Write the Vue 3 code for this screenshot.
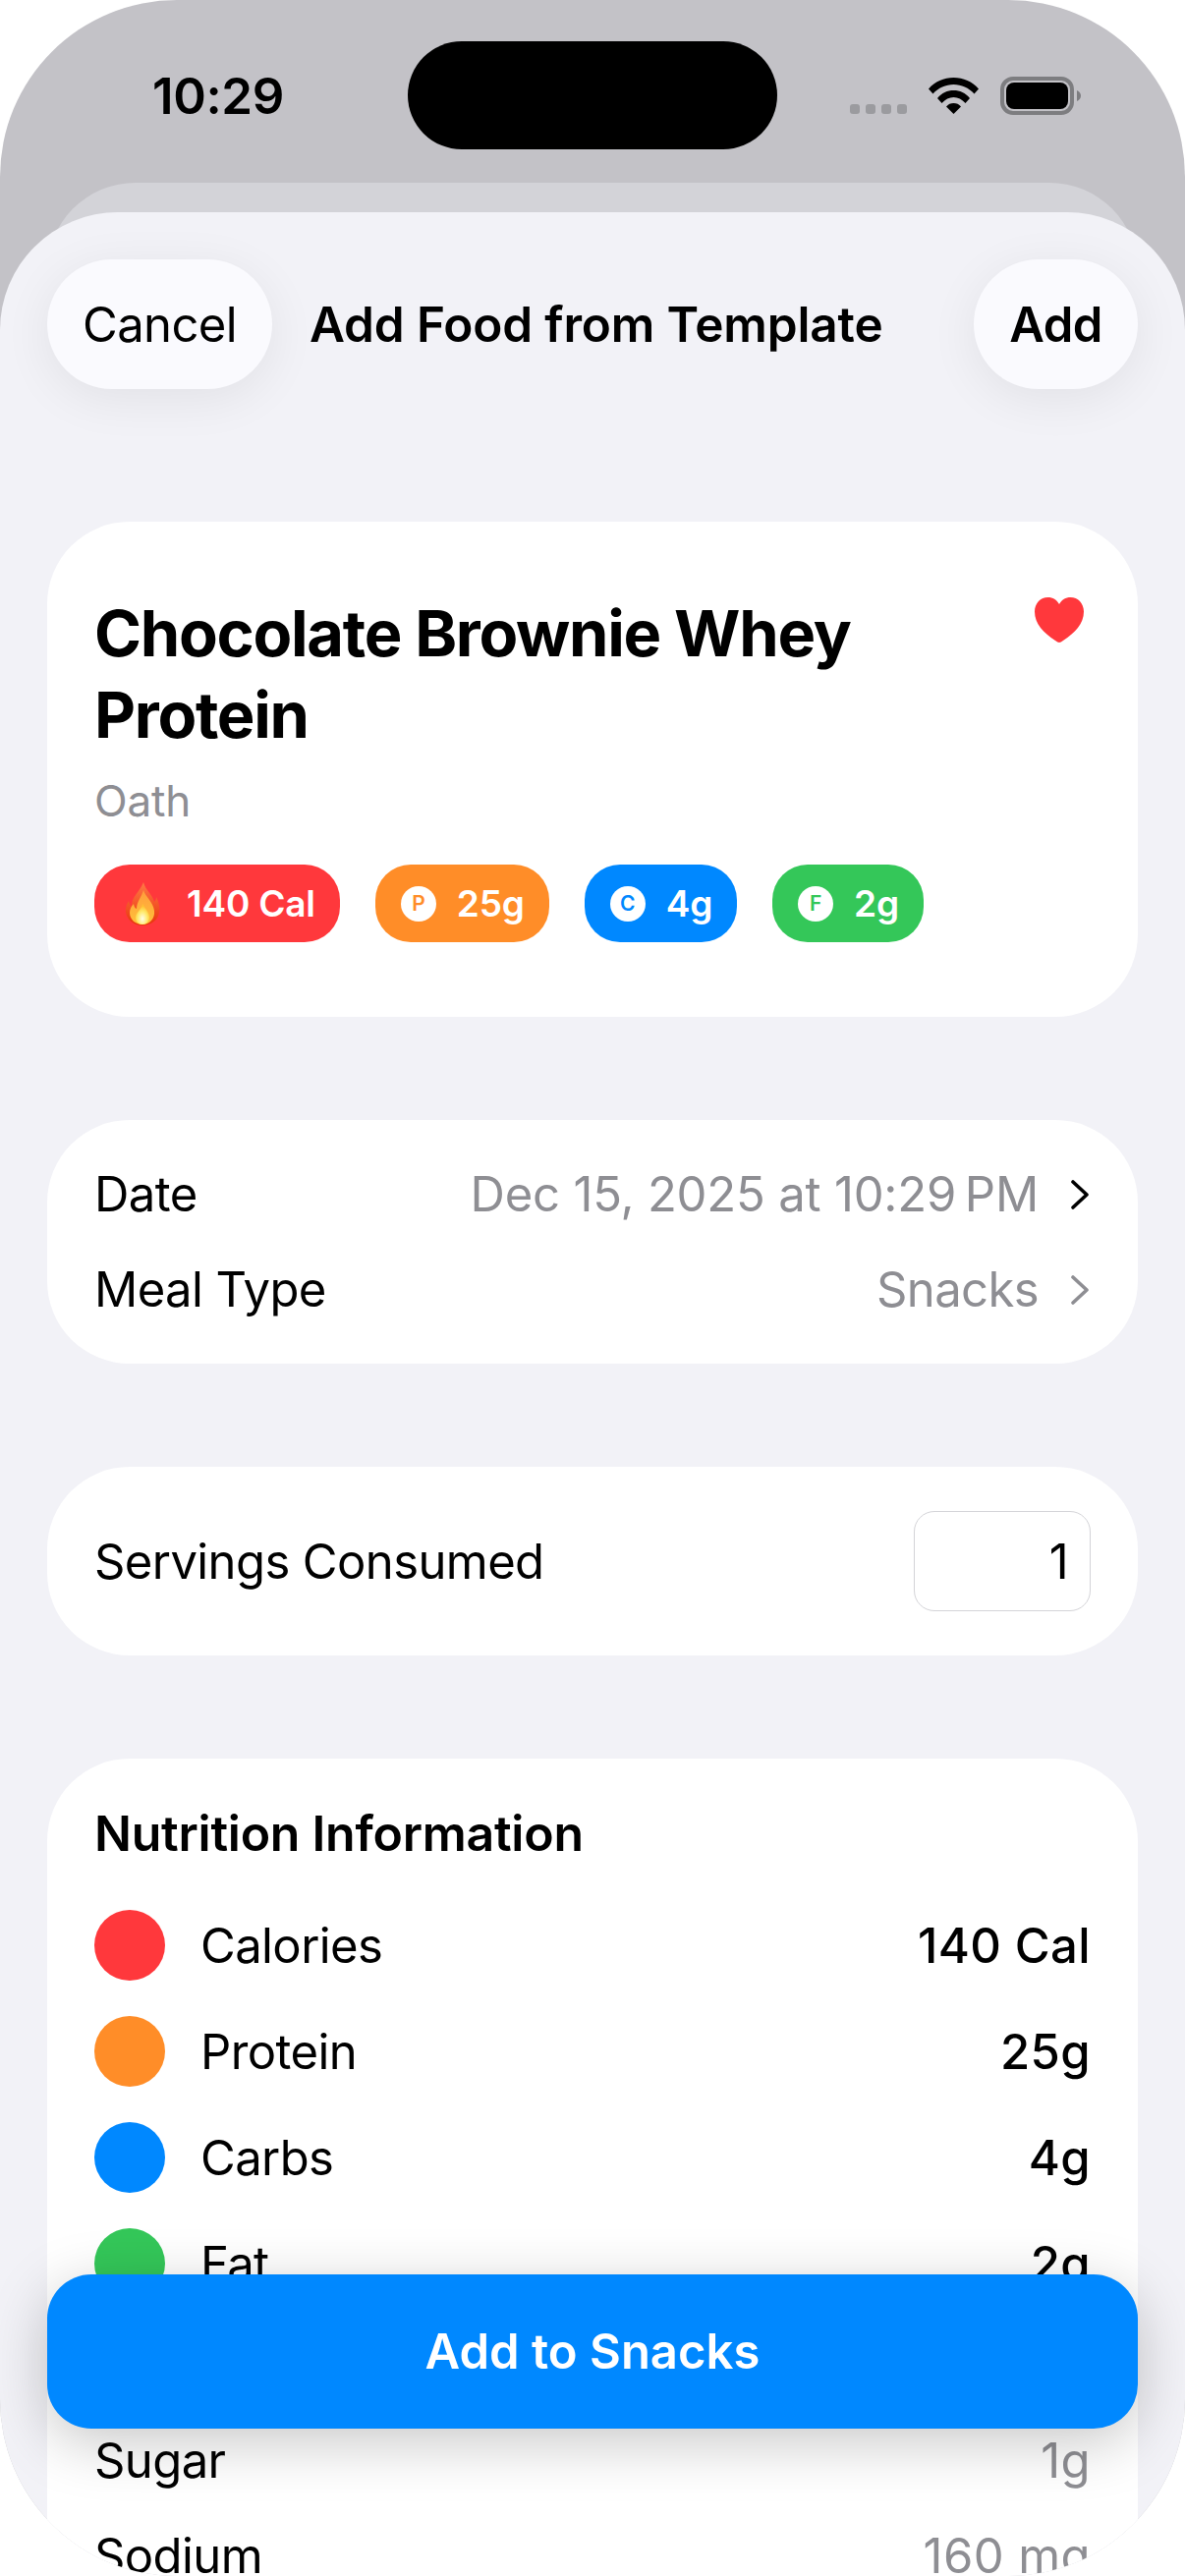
<script setup>
const chips = [
  { cls: 'red', text: '140 Cal' },
  { cls: 'orange', letter: 'P', text: '25g' },
  { cls: 'blue', letter: 'C', text: '4g' },
  { cls: 'green', letter: 'F', text: '2g' },
]
const macros = [
  { cls: 'red', label: 'Calories', value: '140 Cal' },
  { cls: 'orange', label: 'Protein', value: '25g' },
  { cls: 'blue', label: 'Carbs', value: '4g' },
  { cls: 'green', label: 'Fat', value: '2g' },
]
const details = [
  { label: 'Sugar', value: '1g' },
  { label: 'Sodium', value: '160 mg' },
]
</script>

<template>
  <div class="screen">
    <div class="status">
      <span class="time">10:29</span>
      <div class="island"></div>
      <div class="status-icons">
        <div class="signal"><i></i><i></i><i></i><i></i></div>
        <svg class="wifi" viewBox="0 0 51 37" width="51" height="37">
          <path d="M0 11.500C6.500 4 15.500 0 25.500 0S44.500 4 51 11.500L46.500 16.500C41 10.500 33.500 7 25.500 7S10 10.500 4.500 16.500Z" />
          <path d="M9 21C13.500 15.500 19 13 25.500 13S37.500 15.500 42 21L37.500 26C34 22 30 20 25.500 20S17 22 13.500 26Z" />
          <path d="M18 29.500C20 27 22.500 26 25.500 26S31 27 33 29.500L25.500 37Z" />
        </svg>
        <svg class="battery" viewBox="0 0 82 39" width="82" height="39">
          <rect x="2" y="2" width="71" height="35" rx="11" fill="none" stroke="#7d7d80" stroke-width="4" />
          <rect x="6" y="6" width="63" height="27" rx="8" fill="#000" />
          <path d="M78 14C80.500 15 82 17 82 19.500S80.500 24 78 25Z" fill="#7d7d80" />
        </svg>
      </div>
    </div>

    <div class="back-sheet"></div>

    <div class="sheet">
      <header class="nav">
        <button class="pill cancel">Cancel</button>
        <span class="nav-title">Add Food from Template</span>
        <button class="pill add">Add</button>
      </header>

      <section class="card food">
        <div class="food-head">
          <h1 class="food-title">Chocolate Brownie Whey Protein</h1>
          <svg class="heart" viewBox="0 0 50 46" width="50" height="46">
            <path d="M25 46C24 46 22.500 45 21 44C9 36 0 27 0 14.500C0 6 6 0 13.500 0C18.500 0 22.500 2.500 25 7C27.500 2.500 31.500 0 36.500 0C44 0 50 6 50 14.500C50 27 41 36 29 44C27.500 45 26 46 25 46Z" fill="#ff383c" />
          </svg>
        </div>
        <p class="brand">Oath</p>
        <div class="chips">
          <div v-for="c in chips" :key="c.text" class="chip" :class="c.cls">
            <svg v-if="!c.letter" class="flame" viewBox="0 0 42 44" width="42" height="44">
              <defs>
                <linearGradient id="fl1" x1="0" y1="0" x2="0" y2="1">
                  <stop offset="0" stop-color="#ff7a45" />
                  <stop offset="1" stop-color="#e8330c" />
                </linearGradient>
                <linearGradient id="fl2" x1="0" y1="0" x2="0" y2="1">
                  <stop offset="0" stop-color="#ff9d3c" />
                  <stop offset="1" stop-color="#ffc23a" />
                </linearGradient>
                <radialGradient id="fl3" cx="0.5" cy="0.72" r="0.6">
                  <stop offset="0" stop-color="#fffde8" />
                  <stop offset="0.6" stop-color="#ffe96a" />
                  <stop offset="1" stop-color="#ffc233" />
                </radialGradient>
              </defs>
              <path d="M22 0C24 8 31 12 33 20C34.500 18.500 35 17 35 15C38 21 39 26 38 31C36.500 39 29 44 21 44C12 44 5 38 4 30C3.500 26 5 22 7 19C7.500 22 8.500 23.500 10 24.500C9.500 15 18 10 22 0Z" fill="url(#fl1)" />
              <path d="M22 8C24 15 32 20 33 29C34 37 28 43 21 43C14 43 8 38 8 31C8 27 10 24 12 22C12.500 25 13.500 26.500 15 27C15 20 20 15 22 8Z" fill="url(#fl2)" />
              <path d="M21.500 22C23 27 28 30 28 35.500C28 40 25 43 21 43C17 43 14 40 14 36C14 31 19.500 28 21.500 22Z" fill="url(#fl3)" />
            </svg>
            <span v-else class="chip-badge">{{ c.letter }}</span>
            <span class="chip-text">{{ c.text }}</span>
          </div>
        </div>
      </section>

      <section class="card meta">
        <div class="meta-row">
          <span>Date</span>
          <span class="meta-value">
            <span class="muted date">Dec 15, 2025 at 10:29&#8239;PM</span>
            <svg class="chev" viewBox="0 0 18 30" width="18" height="30"><path d="M2 2L16 15L2 28" fill="none" stroke="#000" stroke-width="3.600" stroke-linecap="round" stroke-linejoin="round" /></svg>
          </span>
        </div>
        <div class="meta-row">
          <span>Meal Type</span>
          <span class="meta-value">
            <span class="muted">Snacks</span>
            <svg class="chev" viewBox="0 0 18 30" width="18" height="30"><path d="M2 2L16 15L2 28" fill="none" stroke="#8e8e93" stroke-width="3.600" stroke-linecap="round" stroke-linejoin="round" /></svg>
          </span>
        </div>
      </section>

      <section class="card servings">
        <span>Servings Consumed</span>
        <div class="servings-input">1</div>
      </section>

      <section class="card nutrition">
        <h2 class="nutrition-title">Nutrition Information</h2>
        <div class="macros">
          <div v-for="m in macros" :key="m.label" class="macro">
            <span class="dot" :class="m.cls"></span>
            <span class="macro-label">{{ m.label }}</span>
            <span class="macro-value">{{ m.value }}</span>
          </div>
        </div>
        <div class="details">
          <div v-for="d in details" :key="d.label" class="detail">
            <span>{{ d.label }}</span>
            <span class="muted detail-value">{{ d.value }}</span>
          </div>
        </div>
      </section>
    </div>

    <button class="cta">Add to Snacks</button>
  </div>
</template>

<style>
html, body { margin: 0; background: #fff; }
</style>

<style scoped>
.screen {
  position: relative;
  width: 1206px;
  height: 2622px;
  overflow: hidden;
  border-radius: 180px;
  background: #c3c2c7;
  font-family: Inter, "Liberation Sans", sans-serif;
  font-size: 49px;
  letter-spacing: -0.6px;
  color: #000;
}
.status {
  position: relative;
  height: 186px;
  box-sizing: border-box;
  padding: 42px 0 0 155px;
}
.time {
  display: block;
  font-size: 51px;
  font-weight: 600;
  line-height: 60px;
  margin-top: 26px;
  letter-spacing: -0.4px;
}
.island {
  position: absolute;
  left: 415px;
  top: 42px;
  width: 376px;
  height: 110px;
  border-radius: 55px;
  background: #000;
}
.status-icons {
  position: absolute;
  left: 865px;
  top: 78px;
  display: flex;
  align-items: flex-start;
}
.signal { display: flex; gap: 6px; margin-top: 28px; margin-right: 22px; }
.signal i { width: 10px; height: 10px; border-radius: 3px; background: #9b9b9f; }
.wifi { fill: #000; margin-top: 1px; margin-right: 22px; }
.back-sheet {
  height: 130px;
  margin: 0 48px -100px;
  border-radius: 90px 90px 0 0;
  background: #d3d3d8;
}
.sheet {
  position: relative;
  height: 2406px;
  box-sizing: border-box;
  padding: 48px 48px 0;
  background: #f2f2f7;
  border-radius: 120px 120px 0 0;
  display: flex;
  flex-direction: column;
}
.nav {
  display: flex;
  align-items: center;
  height: 132px;
  margin-bottom: 135px;
}
.pill {
  height: 132px;
  border: 0;
  border-radius: 66px;
  background: #fafafe;
  box-shadow: 0 10px 50px rgba(0, 0, 0, 0.07);
  font-family: inherit;
  font-size: 49px;
  letter-spacing: -0.6px;
  color: #000;
  padding: 0;
}
.cancel { width: 229px; }
.add { width: 167px; font-weight: 600; margin-left: auto; }
.nav-title { font-weight: 600; margin-left: 38px; letter-spacing: -0.15px; font-size: 49.500px; }
.card {
  background: #fff;
  border-radius: 84px;
  box-sizing: border-box;
  margin-bottom: 105px;
  flex: none;
}
.food { height: 504px; padding: 72px 48px 0 48px; }
.food-head { display: flex; align-items: flex-start; justify-content: space-between; }
.food-title {
  margin: 0;
  font-size: 65px;
  line-height: 83px;
  font-weight: 700;
  letter-spacing: -1.3px;
  width: 900px;
}
.heart { margin: 5px 7px 0 0; flex: none; }
.brand {
  margin: 19px 0 0;
  font-size: 44px;
  line-height: 54px;
  color: #8e8e93;
  letter-spacing: -0.2px;
}
.chips { display: flex; gap: 36px; margin-top: 38px; }
.chip {
  height: 79px;
  border-radius: 36px;
  padding: 0 25px 0 26px;
  display: flex;
  align-items: center;
  gap: 21px;
  color: #fff;
  font-size: 37px;
  font-weight: 600;
  letter-spacing: -0.2px;
}
.chip .flame { margin: 0 3px 0 2px; }
.chip-badge {
  width: 36px;
  height: 36px;
  border-radius: 50%;
  background: #fff;
  font-size: 21px;
  font-weight: 600;
  display: flex;
  align-items: center;
  justify-content: center;
}
.red { background: #ff383c; }
.orange { background: #ff8d28; }
.blue { background: #0088ff; }
.green { background: #34c759; }
.orange .chip-badge { color: #ff8d28; }
.blue .chip-badge { color: #0088ff; }
.green .chip-badge { color: #34c759; }
.meta {
  height: 248px;
  padding: 38px 48px;
  display: flex;
  flex-direction: column;
  gap: 21px;
}
.meta-row { display: flex; justify-content: space-between; align-items: center; line-height: 76px; height: 76px; }
.meta-value { display: flex; align-items: center; gap: 33px; }
.chev { margin-right: 2px; }
.muted { color: #8e8e93; }
.date { letter-spacing: -0.2px; }
.servings {
  height: 192px;
  padding: 0 48px;
  display: flex;
  justify-content: space-between;
  align-items: center;
}
.servings-input {
  width: 180px;
  height: 102px;
  box-sizing: border-box;
  border: 1.5px solid #d4d4d8;
  border-radius: 21px;
  padding-right: 22px;
  display: flex;
  align-items: center;
  justify-content: flex-end;
}
.nutrition { height: 900px; margin-bottom: 0; padding: 48px 48px 0; }
.nutrition-title { margin: 0 0 50px; font-size: 50px; font-weight: 600; line-height: 56px; letter-spacing: -0.25px; }
.macros { display: flex; flex-direction: column; gap: 36px; }
.macro { display: flex; align-items: center; height: 72px; }
.dot { width: 72px; height: 72px; border-radius: 50%; margin-right: 36px; flex: none; }
.macro-label { flex: 1; }
.macro-value { font-weight: 500; letter-spacing: 0.4px; }
.details { margin-top: 127px; display: flex; flex-direction: column; gap: 21px; }
.detail { display: flex; justify-content: space-between; line-height: 76px; height: 76px; }
.detail-value { letter-spacing: 0.4px; }
.cta {
  position: absolute;
  left: 48px;
  right: 48px;
  bottom: 150px;
  height: 157px;
  border: 0;
  border-radius: 45px;
  background: #0088ff;
  color: #fff;
  font-family: inherit;
  font-size: 49px;
  font-weight: 600;
  letter-spacing: 0;
  box-shadow: 0 14px 60px rgba(0, 0, 0, 0.22);
}
</style>
